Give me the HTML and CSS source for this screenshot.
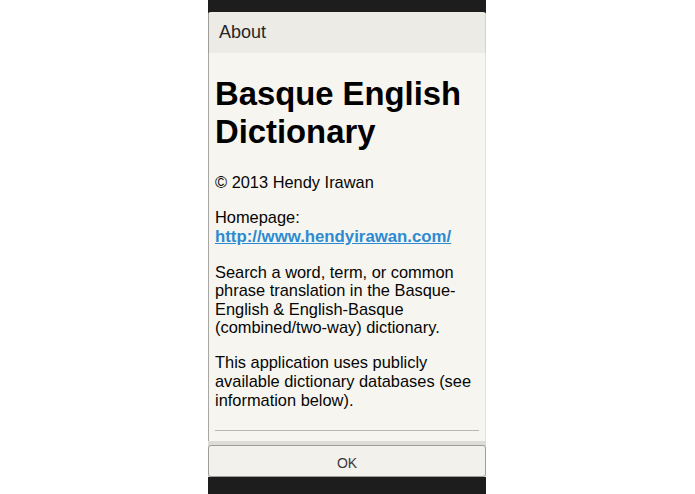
FILE: index.html
```html
<!DOCTYPE html>
<html>
<head>
<meta charset="utf-8">
<link rel="stylesheet" href="styles.css">
</head>
<body>
<div class="phone">
  <div class="dialog">
    <div class="title">About</div>
    <div class="content">
      <h1 class="heading">Basque English Dictionary</h1>
      <p class="para">© 2013 Hendy Irawan</p>
      <p class="para">Homepage:<br><a class="link" href="#">http://www.hendyirawan.com/</a></p>
      <p class="para">Search a word, term, or common phrase translation in the Basque-English &amp; English-Basque (combined/two-way) dictionary.</p>
      <p class="para">This application uses publicly available dictionary databases (see information below).</p>
      <div class="sep"></div>
    </div>
    <div class="buttonbar">
      <button class="ok">OK</button>
    </div>
  </div>
</div>
</body>
</html>
```

FILE: styles.css
```css
html, body {
  margin: 0;
  padding: 0;
  background: #ffffff;
}
body {
  font-family: "Liberation Sans", Arial, sans-serif;
  width: 695px;
  height: 494px;
  overflow: hidden;
}
.phone {
  margin-left: 208px;
  width: 278px;
  height: 494px;
  box-sizing: border-box;
  background: #1d1d1d;
  padding: 12px 0 17px 0;
  display: flex;
  flex-direction: column;
}
.dialog {
  flex: 1;
  display: flex;
  flex-direction: column;
  border-radius: 3px 3px 0 0;
  overflow: hidden;
  min-height: 0;
}
.title {
  height: 41px;
  line-height: 41px;
  background: #ecebe6;
  color: #262626;
  font-size: 18px;
  padding-left: 10px;
  border-left: 1px solid #9c9c9a;
  border-right: 1px solid #d4d2cc;
}
.content {
  flex: 1;
  min-height: 0;
  overflow: hidden;
  background: #f7f5f0;
  padding: 1px 6px 0 6px;
  border-left: 1px solid #a8a7a4;
  border-right: 1px solid #e2e0da;
  color: #050505;
  display: flex;
  flex-direction: column;
}
.heading {
  font-size: 32.8px;
  line-height: 38px;
  font-weight: bold;
  color: #000000;
  margin: 21px 0 22px 0;
}
.para {
  font-size: 16.4px;
  line-height: 18.6px;
  margin: 0 0 16.4px 0;
}
.link {
  color: #2d8bd2;
  font-weight: bold;
  font-size: 16.8px;
  text-decoration: underline;
}
.sep {
  margin-top: auto;
  margin-bottom: 10px;
  border-top: 1px solid #b9b8b4;
}
.buttonbar {
  background: #dedcd6;
  padding-top: 4px;
  display: flex;
}
.ok {
  flex: 1;
  height: 32px;
  margin: 0;
  background: #f2f1ec;
  border: 1px solid #9e9d9a;
  border-radius: 3px;
  font-family: "Liberation Sans", Arial, sans-serif;
  font-size: 14px;
  color: #3a3a3a;
  padding: 3px 0 0 0;
}
```
